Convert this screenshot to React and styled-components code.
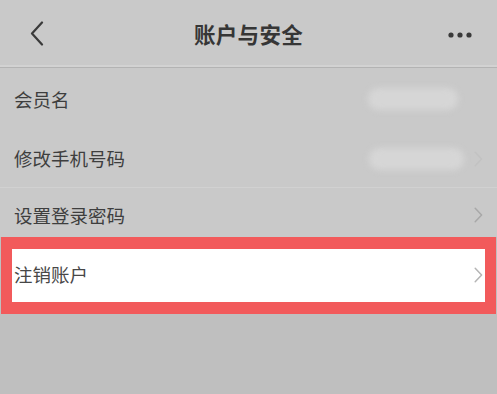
import styled, { createGlobalStyle } from "styled-components";

const GlobalStyle = createGlobalStyle`
  html, body {
    margin: 0;
    padding: 0;
    background: #bfbfbf;
  }
  body {
    font-family: "Noto Sans CJK SC", "Noto Sans", sans-serif;
  }
`;

const Back = () => (
  <svg width="14" height="25" viewBox="0 0 14 25" fill="none">
    <path d="M12 1.5 L2 12.5 L12 23.5" stroke="#3a3a3a" strokeWidth="2.2" strokeLinecap="round" strokeLinejoin="round" />
  </svg>
);

const More = () => (
  <svg width="24" height="6" viewBox="0 0 24 6">
    <circle cx="3" cy="3" r="2.6" fill="#3a3a3a" />
    <circle cx="12" cy="3" r="2.6" fill="#3a3a3a" />
    <circle cx="21" cy="3" r="2.6" fill="#3a3a3a" />
  </svg>
);

const Chevron = ({ color = "#a8a8a8" }) => (
  <svg width="9" height="16" viewBox="0 0 9 16" fill="none">
    <path d="M1.2 1.2 L7.6 8 L1.2 14.8" stroke={color} strokeWidth="1.5" strokeLinecap="round" strokeLinejoin="round" />
  </svg>
);

const App = () => {
  return (
    <>
      <GlobalStyle />
      <Screen>
        <Header>
          <IconButton>
            <Back />
          </IconButton>
          <Title>账户与安全</Title>
          <IconButton $right>
            <More />
          </IconButton>
        </Header>
        <List>
          <Row $height={62}>
            <Label>会员名</Label>
            <Blurred $width={90} $mr={25} />
          </Row>
          <Row $height={58} $divider>
            <Label>修改手机号码</Label>
            <Right>
              <Blurred $width={95} $mr={10} />
              <Chevron color="#c2c2c2" />
            </Right>
          </Row>
          <Row $height={49} $shift={5}>
            <Label>设置登录密码</Label>
            <Right>
              <Chevron />
            </Right>
          </Row>
        </List>
        <Highlight>
          <HighlightRow>
            <Label $dark>注销账户</Label>
            <Chevron color="#b5b5b5" />
          </HighlightRow>
        </Highlight>
      </Screen>
    </>
  );
};

export default App;

const Screen = styled.div`
  width: 497px;
  height: 394px;
  background: #bfbfbf;
  overflow: hidden;
`;

const Header = styled.header`
  height: 68px;
  display: flex;
  align-items: center;
  justify-content: space-between;
  padding: 0 25px 0 30px;
  background: #c9c9c9;
  border-bottom: 1px solid #b3b3b3;
  box-shadow: inset 0 -2px 0 #d2d2d2;
  box-sizing: border-box;
  position: relative;
`;

const IconButton = styled.div`
  display: flex;
  align-items: center;
  width: 24px;
  height: 30px;
  justify-content: ${(p) => (p.$right ? "flex-end" : "flex-start")};
  padding-top: ${(p) => (p.$right ? "2px" : "0")};
`;

const Title = styled.h1`
  margin: 0;
  font-size: 21.5px;
  font-weight: 700;
  color: #363636;
  letter-spacing: 0.3px;
  position: absolute;
  left: 0;
  right: 0;
  text-align: center;
  pointer-events: none;
`;

const List = styled.div`
  background: #c9c9c9;
`;

const Row = styled.div`
  height: ${(p) => p.$height}px;
  display: flex;
  align-items: center;
  justify-content: space-between;
  padding: ${(p) => (p.$shift ? `${p.$shift}px` : "0")} 14px 0 14px;
  box-sizing: border-box;
  border-bottom: ${(p) => (p.$divider ? "1px solid #d1d1d1" : "none")};
`;

const Label = styled.span`
  font-size: 18.5px;
  color: ${(p) => (p.$dark ? "#474747" : "#3e3e3e")};
  line-height: 1;
`;

const Right = styled.div`
  display: flex;
  align-items: center;
`;

const Blurred = styled.div`
  width: ${(p) => p.$width}px;
  height: 22px;
  margin-right: ${(p) => p.$mr}px;
  border-radius: 10px;
  background: #d6d6d6;
  filter: blur(3px);
`;

const Highlight = styled.div`
  margin: 0 1px;
  border: 11px solid #f25a5b;
  border-top-width: 12px;
  border-bottom-width: 12px;
  background: #ffffff;
`;

const HighlightRow = styled.div`
  height: 53px;
  display: flex;
  align-items: center;
  justify-content: space-between;
  padding: 0 2px 2px 2px;
  box-sizing: border-box;
`;
